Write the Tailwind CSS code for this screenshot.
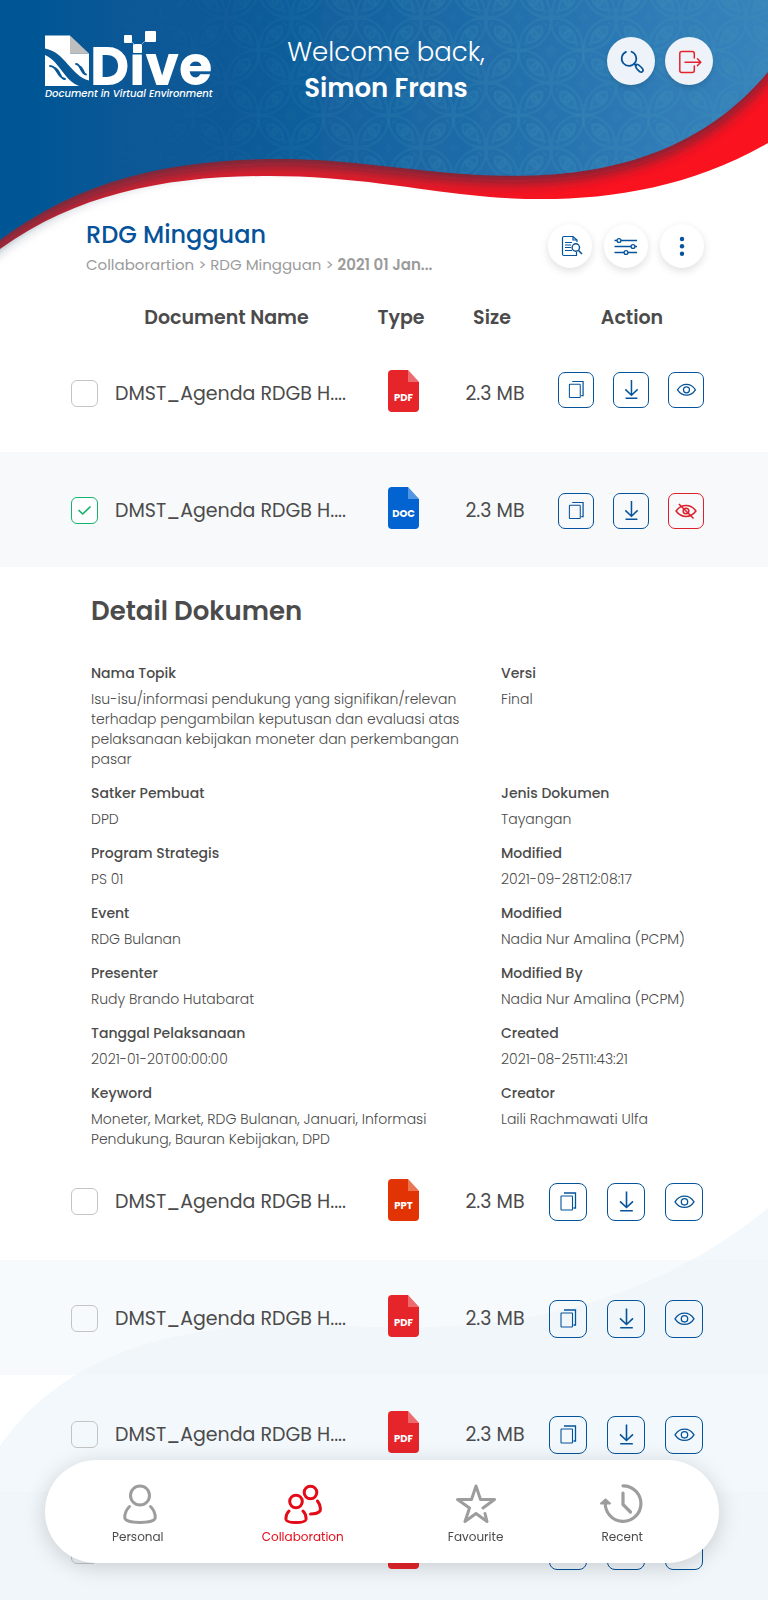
<!DOCTYPE html>
<html lang="id">
<head>
<meta charset="utf-8">
<meta name="viewport" content="width=device-width, initial-scale=1">
<title>Dive - RDG Mingguan</title>
<script src="https://cdn.jsdelivr.net/npm/@tailwindcss/browser@4"></script>
</head>
<body class="bg-white font-['Poppins','Inter',sans-serif] text-[#4b4b4b]">

<!-- Shared icons -->
<svg class="hidden" aria-hidden="true">
  <symbol id="copy" viewBox="0 0 36 36"><g fill="none" stroke="currentColor" stroke-width="1.100"><rect x="11" y="12" width="11.500" height="14" rx=".6"/><path d="M14 9H25.500V24H23.500" stroke-width="1.300"/></g></symbol>
  <symbol id="down" viewBox="0 0 36 36"><g fill="none" stroke="currentColor" stroke-width="1.600"><path d="M18.500 7.500V23M12 17.300L18.500 23.500L25 17.300M12.200 26.700H24.800"/></g></symbol>
  <symbol id="eye" viewBox="0 0 36 36"><g fill="none" stroke="currentColor" stroke-width="1.300"><path d="M9 17.800C14 10.200 23 10.200 28 17.800C23 25.300 14 25.300 9 17.800Z"/><circle cx="18.500" cy="17.800" r="3.200"/></g></symbol>
  <symbol id="eyeoff" viewBox="0 0 36 36"><g fill="none" stroke="currentColor" stroke-width="1.600"><path d="M7.500 18C13 10.300 23 10.300 28.500 18C23 25.700 13 25.700 7.500 18Z"/><circle cx="18" cy="18" r="3"/><path d="M10.500 10.500L26 26"/></g></symbol>
  <symbol id="file" viewBox="0 0 31 42"><path fill="currentColor" d="M4 0H20L31 12V38Q31 42 27 42H4Q0 42 0 38V4Q0 0 4 0Z"/><path fill="#fff" fill-opacity=".32" d="M20 0L31 12H20Z"/></symbol>
</svg>

<div class="relative min-h-screen overflow-hidden">
  <!-- Backdrop waves -->
  <svg class="absolute inset-x-0 top-0 -z-10 h-[280px] w-full" viewBox="0 0 768 280" preserveAspectRatio="none" aria-hidden="true">
    <defs>
      <linearGradient id="sea" x1="0" y1="0" x2="1" y2="0"><stop offset="0" stop-color="#055795"/><stop offset=".3" stop-color="#085896"/><stop offset=".55" stop-color="#1b68a5"/><stop offset=".8" stop-color="#2e7ab6"/><stop offset="1" stop-color="#3b86be"/></linearGradient>
      <linearGradient id="fade" x1="0" y1="0" x2="1" y2="0"><stop offset=".15" stop-color="#000"/><stop offset=".75" stop-color="#fff"/></linearGradient>
      <linearGradient id="ribbon" x1="0" y1="0" x2="1" y2="0"><stop offset="0" stop-color="#d42332"/><stop offset=".45" stop-color="#e31c29"/><stop offset=".75" stop-color="#fa121f"/></linearGradient>
      <mask id="veil"><rect width="768" height="280" fill="url(#fade)"/></mask>
      <pattern id="batik" x="486" y="18" width="65" height="65" patternUnits="userSpaceOnUse">
        <g fill="none" stroke="#3f93b4" stroke-opacity=".26" stroke-width="2.500">
          <g id="petal"><path d="M1 1C14 -2 33 10 31.500 31.500C10 33 -2 14 1 1Z"/><path d="M9 9C17 7 25 14 25 25C14 25 7 17 9 9Z" fill="#3f93b4" fill-opacity=".12"/><path stroke-width="1.500" d="M4 8L8 4M24.500 28.500L28.500 24.500"/><ellipse cx="16.250" cy="16.250" rx="3.500" ry="2.200" transform="rotate(-45 16.250 16.250)"/></g>
          <use href="#petal" transform="translate(32.500 32.500)"/>
          <use href="#petal" transform="matrix(-1 0 0 1 65 0)"/>
          <use href="#petal" transform="matrix(-1 0 0 1 32.500 32.500)"/>
          <path fill="#3f93b4" fill-opacity=".12" stroke="none" d="M32.500 -7Q34 -1 39 0Q34 1 32.500 7Q31 1 26 0Q31 -1 32.500 -7ZM32.500 58Q34 64 39 65Q34 66 32.500 72Q31 66 26 65Q31 64 32.500 58ZM0 25.500L7 32.500L0 39.500M65 25.500L58 32.500L65 39.500"/>
        </g>
      </pattern>
      <filter id="shade" x="-10%" y="-10%" width="120%" height="130%"><feDropShadow dx="0" dy="6" stdDeviation="7" flood-color="#17314b" flood-opacity=".62"/></filter>
    </defs>
    <path fill="url(#ribbon)" d="M0 249C80 192 170 176 270 176C350 176 420 190 470 195C560 205 670 200 768 143V0H0Z"/>
    <path fill="url(#sea)" filter="url(#shade)" d="M-40 -40H808V20L768 72C690 165 580 180 480 175C400 170 350 159 280 159C170 159 80 180 0 240L-40 275Z"/>
    <path fill="url(#batik)" mask="url(#veil)" d="M0 0H768V72C690 165 580 180 480 175C400 170 350 159 280 159C170 159 80 180 0 240Z"/>
  </svg>
  <svg class="absolute inset-x-0 bottom-0 -z-10 h-[400px] w-full" viewBox="0 0 768 400" preserveAspectRatio="none" aria-hidden="true">
    <path fill="#f3f8fc" d="M0 246C80 130 230 120 350 126C500 134 640 112 768 8V400H0Z"/>
  </svg>

  <header class="flex h-[200px] items-start pl-[45px] pr-[55px]">
    <a href="#" aria-label="Dive, Document in Virtual Environment" class="block pt-[30px]">
      <svg class="h-[70px] w-[170px] overflow-visible" viewBox="0 0 170 70">
        <path fill="#fff" d="M0 5.500H25V23.500H44V51L0 56Z"/>
        <path fill="#fff" d="M0 40V56H38Z"/>
        <path fill="#bfbfbf" d="M25 5.500L44 23.500H25Z"/>
        <path fill="#085896" d="M0 18.500C20 22 26 46 44 50.500V57H38C20 54 16 32 0 25Z"/>
        <g fill="none" stroke="#085896" stroke-width="1.800" stroke-linecap="round"><path d="M5 36C13 36 11 47 20 49M8 37C16 39 14 48 19 49M31 34C36 34 35 43 41 44.500M34 36C39 38 38 44 41 44.500"/></g>
        <text x="45" y="55" fill="#fff" font-family="Poppins" font-weight="700" font-size="54">Dive</text>
        <rect x="85" y="8" width="16" height="16.500" fill="#085997"/>
        <g fill="#fff"><rect x="79" y="5" width="8" height="8" rx="1"/><rect x="100" y="1" width="11" height="11" rx="1"/><rect x="88" y="14" width="9" height="9" rx="1"/><path d="M87 12L90 15M100 11L96 15" stroke="#9fc0dc" stroke-width=".8"/></g>
        <text x="0" y="67" fill="#fff" font-family="Poppins" font-style="italic" font-weight="500" font-size="10">Document in Virtual Environment</text>
      </svg>
    </a>
    <h1 class="flex-1 pr-[50px] pt-[34px] text-center text-[26px] leading-[36px] font-light text-white">Welcome back,<br><strong class="font-semibold">Simon Frans</strong></h1>
    <div class="flex gap-[10px] pt-[37px]">
      <button type="button" aria-label="Cari" class="size-12 rounded-full bg-[#eef3f9] text-[#05539a] shadow-md">
        <svg class="size-full" viewBox="0 0 48 48" fill="none" stroke="currentColor" stroke-width="1.700" stroke-linecap="round"><path d="M24.500 14.700A7.300 7.300 0 1 1 19 14.900M27.300 26.800L29.200 28.600"/><path d="M29 27.500C30.500 26.500 32 28 34.500 30.500C37.500 33.500 35.500 36.500 32.500 34.500C29.500 32 27.500 29 29 27.500Z"/></svg>
      </button>
      <button type="button" aria-label="Keluar" class="size-12 rounded-full bg-[#eef3f9] text-[#e5222e] shadow-md">
        <svg class="size-full" viewBox="0 0 48 48" fill="none" stroke="currentColor" stroke-width="1.500" stroke-linecap="round" stroke-linejoin="round"><path d="M29.300 21V16.500Q29.300 14.500 27.300 14.500H16.800Q14.800 14.500 14.800 16.500V33.500Q14.800 35.500 16.800 35.500H27.300Q29.300 35.500 29.300 33.500V29M20 25.200H35.500M32.500 21.800L35.800 25.200L32.500 28.600"/></svg>
      </button>
    </div>
  </header>

  <main>
    <div class="flex h-[92px] items-start justify-between pr-16 pl-[86px]">
      <div class="pt-[19px]">
        <h2 class="text-[24px] leading-8 font-medium text-[#05539a]">RDG Mingguan</h2>
        <nav aria-label="Breadcrumb" class="mt-1 text-[15px] leading-5 text-[#9b9b9b]"><a href="#">Collaborartion</a> &gt; <a href="#">RDG Mingguan</a> &gt; <a href="#" class="font-semibold">2021 01 Jan...</a></nav>
      </div>
      <div class="flex gap-3 pt-6 text-[#05539a]">
        <button type="button" aria-label="Cari dokumen" class="size-11 rounded-full bg-white shadow-[0_3px_8px_rgba(0,0,0,0.13)]">
          <svg class="size-full" viewBox="0 0 44 44" fill="none" stroke="currentColor" stroke-width="1.200"><path d="M29 18V16L25 12.500H16Q14.500 12.500 14.500 14V30Q14.500 31.500 16 31.500H28.500V28M25 12.500V16H29M17 18.500H24M17 21H23M17 23.500H23M17 26.500H24"/><circle cx="27.800" cy="23.500" r="3.700" stroke-width="1.400"/><path d="M30.500 26.500L34 30" stroke-width="1.600"/></svg>
        </button>
        <button type="button" aria-label="Filter" class="size-11 rounded-full bg-white shadow-[0_3px_8px_rgba(0,0,0,0.13)]">
          <svg class="size-full" viewBox="0 0 44 44" fill="#fff" stroke="currentColor" stroke-width="1.300"><path d="M10.500 16.500H33M10.500 22.500H33M10.500 28.500H33"/><circle cx="15" cy="16.500" r="1.900"/><circle cx="29" cy="22.500" r="1.900"/><circle cx="22" cy="28.500" r="1.900"/></svg>
        </button>
        <button type="button" aria-label="Menu lainnya" class="size-11 rounded-full bg-white shadow-[0_3px_8px_rgba(0,0,0,0.13)]">
          <svg class="size-full" viewBox="0 0 44 44" fill="currentColor"><circle cx="22" cy="15" r="2.200"/><circle cx="22" cy="22.300" r="2.200"/><circle cx="22" cy="29.700" r="2.200"/></svg>
        </button>
      </div>
    </div>

    <table class="w-full table-fixed border-collapse">
      <colgroup><col class="w-[115px]"><col><col class="w-[66px]"><col class="w-[112px]"><col class="w-[220px]"></colgroup>
      <thead>
        <tr class="h-[43px] text-[19px] leading-6 [&>th]:pt-2 [&>th]:font-semibold">
          <td></td>
          <th class="pr-8">Document Name</th>
          <th class="pr-1">Type</th>
          <th>Size</th>
          <th class="pr-[52px]">Action</th>
        </tr>
      </thead>
      <tbody class="text-[19px] leading-7">
        <tr class="h-[117px]">
          <td class="p-0 pl-[71px]"><input id="d1" type="checkbox" class="block size-[27px] appearance-none rounded-[6px] border border-[#c4c4c4]"></td>
          <td class="p-0 whitespace-nowrap"><label for="d1">DMST_Agenda RDGB H....</label></td>
          <td class="p-0 pb-1.5"><svg class="mx-auto h-[42px] w-[31px] text-[#e5252a]" viewBox="0 0 31 42"><use href="#file"/><text x="15.500" y="31" text-anchor="middle" fill="#fff" font-family="Poppins" font-weight="700" font-size="10">PDF</text></svg></td>
          <td class="p-0 pl-1.5 text-center">2.3 MB</td>
          <td class="p-0 pr-16 pb-2"><div class="flex justify-end gap-[19px] text-[#05539a]">
            <button type="button" aria-label="Salin" class="size-9 rounded-[7px] border border-current"><svg class="size-full"><use href="#copy"/></svg></button>
            <button type="button" aria-label="Unduh" class="size-9 rounded-[7px] border border-current"><svg class="size-full"><use href="#down"/></svg></button>
            <button type="button" aria-label="Lihat" class="size-9 rounded-[7px] border border-current"><svg class="size-full"><use href="#eye"/></svg></button>
          </div></td>
        </tr>
        <tr class="h-[115px] bg-[#f7f9fb] [&>td]:pt-0.5">
          <td class="p-0 pl-[71px]"><div class="grid size-[27px]"><input id="d2" type="checkbox" checked class="col-start-1 row-start-1 appearance-none rounded-[6px] border border-[#c4c4c4] checked:border-[#15b36b] checked:bg-white"><svg class="pointer-events-none col-start-1 row-start-1 size-full" viewBox="0 0 27 27" fill="none" stroke="#15b36b" stroke-width="1.700" stroke-linecap="round" stroke-linejoin="round"><path d="M8 13.500L11.700 17L19 10"/></svg></div></td>
          <td class="p-0 whitespace-nowrap"><label for="d2">DMST_Agenda RDGB H....</label></td>
          <td class="p-0 pb-1.5"><svg class="mx-auto h-[42px] w-[31px] text-[#0263d1]" viewBox="0 0 31 42"><use href="#file"/><text x="15.500" y="30" text-anchor="middle" fill="#fff" font-family="Poppins" font-weight="700" font-size="10">DOC</text></svg></td>
          <td class="p-0 pl-1.5 text-center">2.3 MB</td>
          <td class="p-0 pr-16"><div class="flex justify-end gap-[19px] text-[#05539a]">
            <button type="button" aria-label="Salin" class="size-9 rounded-[7px] border border-current"><svg class="size-full"><use href="#copy"/></svg></button>
            <button type="button" aria-label="Unduh" class="size-9 rounded-[7px] border border-current"><svg class="size-full"><use href="#down"/></svg></button>
            <button type="button" aria-label="Sembunyikan" class="size-9 rounded-[7px] border border-current text-[#dc202c]"><svg class="size-full"><use href="#eyeoff"/></svg></button>
          </div></td>
        </tr>
        <tr>
          <td colspan="5" class="p-0 pr-10 pl-[91px] pt-[26px]">
            <h3 class="text-[26px] leading-9 font-semibold">Detail Dokumen</h3>
            <dl class="-mb-1.5 mt-[34px] grid grid-cols-[410px_1fr] gap-y-[14px] text-[14px] leading-5 [&_dt]:mb-1.5 [&_dt]:font-medium [&_dd]:font-light [&_dd]:max-w-[372px]">
              <div><dt>Nama Topik</dt><dd>Isu-isu/informasi pendukung yang signifikan/relevan terhadap pengambilan keputusan dan evaluasi atas pelaksanaan kebijakan moneter dan perkembangan pasar</dd></div>
              <div><dt>Versi</dt><dd>Final</dd></div>
              <div><dt>Satker Pembuat</dt><dd>DPD</dd></div>
              <div><dt>Jenis Dokumen</dt><dd>Tayangan</dd></div>
              <div><dt>Program Strategis</dt><dd>PS 01</dd></div>
              <div><dt>Modified</dt><dd>2021-09-28T12:08:17</dd></div>
              <div><dt>Event</dt><dd>RDG Bulanan</dd></div>
              <div><dt>Modified</dt><dd>Nadia Nur Amalina (PCPM)</dd></div>
              <div><dt>Presenter</dt><dd>Rudy Brando Hutabarat</dd></div>
              <div><dt>Modified By</dt><dd>Nadia Nur Amalina (PCPM)</dd></div>
              <div><dt>Tanggal Pelaksanaan</dt><dd>2021-01-20T00:00:00</dd></div>
              <div><dt>Created</dt><dd>2021-08-25T11:43:21</dd></div>
              <div><dt>Keyword</dt><dd>Moneter, Market, RDG Bulanan, Januari, Informasi Pendukung, Bauran Kebijakan, DPD</dd></div>
              <div><dt>Creator</dt><dd>Laili Rachmawati Ulfa</dd></div>
            </dl>
          </td>
        </tr>
        <tr class="h-[117px]">
          <td class="p-0 pl-[71px]"><input id="d3" type="checkbox" class="block size-[27px] appearance-none rounded-[6px] border border-[#c4c4c4]"></td>
          <td class="p-0 whitespace-nowrap"><label for="d3">DMST_Agenda RDGB H....</label></td>
          <td class="p-0 pb-1"><svg class="mx-auto h-[42px] w-[31px] text-[#e13303]" viewBox="0 0 31 42"><use href="#file"/><text x="15.500" y="30" text-anchor="middle" fill="#fff" font-family="Poppins" font-weight="700" font-size="10">PPT</text></svg></td>
          <td class="p-0 pl-1.5 text-center">2.3 MB</td>
          <td class="p-0 pr-[65px]"><div class="flex justify-end gap-5 text-[#05539a]">
            <button type="button" aria-label="Salin" class="size-[38px] rounded-[8px] border border-current"><svg class="size-full"><use href="#copy"/></svg></button>
            <button type="button" aria-label="Unduh" class="size-[38px] rounded-[8px] border border-current"><svg class="size-full"><use href="#down"/></svg></button>
            <button type="button" aria-label="Lihat" class="size-[38px] rounded-[8px] border border-current"><svg class="size-full"><use href="#eye"/></svg></button>
          </div></td>
        </tr>
        <tr class="h-[115px] bg-[#edf3f8]/42 [&>td]:pt-0.5">
          <td class="p-0 pl-[71px]"><input id="d4" type="checkbox" class="block size-[27px] appearance-none rounded-[6px] border border-[#c4c4c4]"></td>
          <td class="p-0 whitespace-nowrap"><label for="d4">DMST_Agenda RDGB H....</label></td>
          <td class="p-0 pb-1.5"><svg class="mx-auto h-[42px] w-[31px] text-[#e5252a]" viewBox="0 0 31 42"><use href="#file"/><text x="15.500" y="31" text-anchor="middle" fill="#fff" font-family="Poppins" font-weight="700" font-size="10">PDF</text></svg></td>
          <td class="p-0 pl-1.5 text-center">2.3 MB</td>
          <td class="p-0 pr-[65px]"><div class="flex justify-end gap-5 text-[#05539a]">
            <button type="button" aria-label="Salin" class="size-[38px] rounded-[8px] border border-current"><svg class="size-full"><use href="#copy"/></svg></button>
            <button type="button" aria-label="Unduh" class="size-[38px] rounded-[8px] border border-current"><svg class="size-full"><use href="#down"/></svg></button>
            <button type="button" aria-label="Lihat" class="size-[38px] rounded-[8px] border border-current"><svg class="size-full"><use href="#eye"/></svg></button>
          </div></td>
        </tr>
        <tr class="h-[117px] [&>td]:pt-0.5">
          <td class="p-0 pl-[71px]"><input id="d5" type="checkbox" class="block size-[27px] appearance-none rounded-[6px] border border-[#c4c4c4]"></td>
          <td class="p-0 whitespace-nowrap"><label for="d5">DMST_Agenda RDGB H....</label></td>
          <td class="p-0 pb-1.5"><svg class="mx-auto h-[42px] w-[31px] text-[#e5252a]" viewBox="0 0 31 42"><use href="#file"/><text x="15.500" y="31" text-anchor="middle" fill="#fff" font-family="Poppins" font-weight="700" font-size="10">PDF</text></svg></td>
          <td class="p-0 pl-1.5 text-center">2.3 MB</td>
          <td class="p-0 pr-[65px]"><div class="flex justify-end gap-5 text-[#05539a]">
            <button type="button" aria-label="Salin" class="size-[38px] rounded-[8px] border border-current"><svg class="size-full"><use href="#copy"/></svg></button>
            <button type="button" aria-label="Unduh" class="size-[38px] rounded-[8px] border border-current"><svg class="size-full"><use href="#down"/></svg></button>
            <button type="button" aria-label="Lihat" class="size-[38px] rounded-[8px] border border-current"><svg class="size-full"><use href="#eye"/></svg></button>
          </div></td>
        </tr>
        <tr class="h-[108px] bg-[#edf3f8]/42 align-top">
          <td class="p-0 pt-[45px] pl-[71px]"><input id="d6" type="checkbox" aria-label="DMST_Agenda RDGB H...." class="block size-[27px] appearance-none rounded-[6px] border border-[#c4c4c4]"></td>
          <td class="p-0"></td>
          <td class="p-0 pt-[35px]"><svg class="mx-auto h-[42px] w-[31px] text-[#e5252a]" viewBox="0 0 31 42"><use href="#file"/></svg></td>
          <td class="p-0"></td>
          <td class="p-0 pt-10 pr-[65px]"><div class="flex justify-end gap-5 text-[#05539a]">
            <button type="button" aria-label="Salin" class="size-[38px] rounded-[8px] border border-current"><svg class="size-full"><use href="#copy"/></svg></button>
            <button type="button" aria-label="Unduh" class="size-[38px] rounded-[8px] border border-current"><svg class="size-full"><use href="#down"/></svg></button>
            <button type="button" aria-label="Lihat" class="size-[38px] rounded-[8px] border border-current"><svg class="size-full"><use href="#eye"/></svg></button>
          </div></td>
        </tr>
      </tbody>
    </table>
  </main>

  <nav aria-label="Utama" class="fixed right-[49px] bottom-[37px] left-[45px] flex items-start justify-between rounded-full bg-white pt-6 pr-[76px] pb-[17px] pl-[67px] text-[12px] leading-[18px] shadow-[0_4px_22px_rgba(0,0,0,0.17)]">
    <a href="#" class="flex flex-col items-center gap-1"><svg class="size-10 text-[#9d9d9d]" viewBox="-2 0 40 40" fill="none" stroke="currentColor" stroke-width="3" stroke-linecap="round"><circle cx="20" cy="11.500" r="9.500"/><path d="M9.500 22.500C6 26 4.500 30 4.800 34C6 40 34 40 35.200 34C35.500 30 34 26 30.500 22.500"/></svg>Personal</a>
    <a href="#" aria-current="page" class="mr-1.5 flex flex-col items-center gap-1 text-[#e30b17]"><svg class="size-10" viewBox="0 0 40 40" fill="none" stroke="currentColor" stroke-width="3" stroke-linecap="round"><circle cx="13" cy="17.500" r="6.300"/><circle cx="27.500" cy="8.500" r="6.300"/><path d="M6 27C3.500 29.500 2.700 32 3 35.500C4 39.500 22 39.500 23 35.500C23.300 32 22.500 29.500 20 27M34.500 17C37.500 21 38 24 37 27C35 29.500 31 30 27.500 30"/></svg>Collaboration</a>
    <a href="#" class="flex flex-col items-center gap-1"><svg class="size-10 text-[#9d9d9d]" viewBox="0 0 40 40" fill="none" stroke="currentColor" stroke-width="3" stroke-linecap="round" stroke-linejoin="round"><path d="M27 24L38.500 15.500H24.500L20 2L15.500 15.500H1.500L13.500 24L9 37.500L20 29.500L31 37.500L29 29.500"/></svg>Favourite</a>
    <a href="#" class="flex flex-col items-center gap-1"><svg class="size-10 overflow-visible text-[#9d9d9d]" viewBox="0 0 40 40" fill="none" stroke="currentColor" stroke-width="3.200" stroke-linejoin="round" stroke-linecap="round"><path d="M21 1.800A17.800 17.800 0 1 1 3.400 18M21 9V20.500L28.500 28"/><path fill="currentColor" stroke-width="2" d="M3.500 15.500L-1 19.500H8Z"/></svg>Recent</a>
  </nav>
</div>
</body>
</html>
